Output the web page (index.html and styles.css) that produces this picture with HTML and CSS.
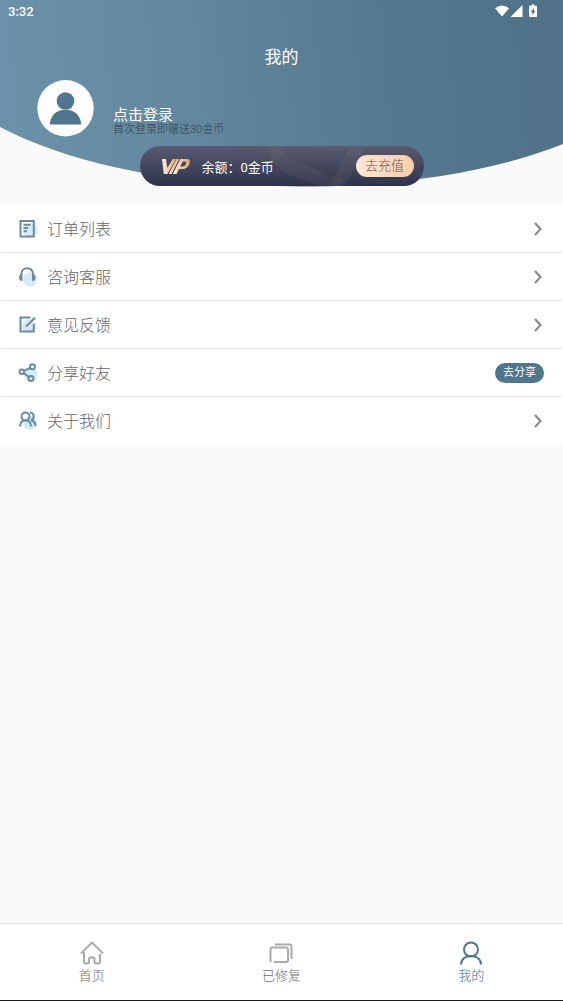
FILE: index.html
```html
<!DOCTYPE html>
<html lang="zh-CN">
<head>
<meta charset="utf-8">
<meta name="viewport" content="width=device-width, initial-scale=1">
<title>我的</title>
<link rel="stylesheet" href="styles.css">
</head>
<body>
<div class="app">
  <header class="hero">
    <svg class="hero-bg" viewBox="0 0 563 205" preserveAspectRatio="none" aria-hidden="true">
      <defs>
        <linearGradient id="sky" x1="0" y1="0.03" x2="1" y2="0">
          <stop offset="0" stop-color="#6b92aa"/>
          <stop offset="0.35" stop-color="#62869d"/>
          <stop offset="0.65" stop-color="#557a90"/>
          <stop offset="1" stop-color="#507187"/>
        </linearGradient>
      </defs>
      <path d="M0 0H563V144C410 205 140 201 0 127Z" fill="url(#sky)"/>
    </svg>
    <div class="status">
      <span>3:32</span>
      <svg width="46" height="16" viewBox="0 0 46 16" fill="#fff" aria-hidden="true">
        <path d="M0 5.200Q7 0 14 5.200L7 13.500Z"/>
        <path d="M27.500 2V14H15.500Z"/>
        <path fill-rule="evenodd" d="M36.500 1.500h3v1.300h1.700q.8 0 .8.800v9.600q0 .8-.8.800h-6.400q-.8 0-.8-.8V3.600q0-.8.800-.8h1.700zM39 4.800L35.800 9h1.600v3.200L40.400 8h-1.500z"/>
      </svg>
    </div>
    <h1 class="title">我的</h1>
    <div class="profile">
      <svg class="avatar" viewBox="0 0 57 57" aria-hidden="true">
        <circle cx="28.500" cy="28.200" r="28.200" fill="#fdfdfd"/>
        <circle cx="28.500" cy="21" r="8.800" fill="#50768d"/>
        <path d="M12.800 44.500C13.500 35 19.500 29.800 28.500 29.800S43.500 35 44.200 44.500Z" fill="#50768d"/>
      </svg>
      <div class="login">
        <a class="login-link" href="#">点击登录</a>
        <span class="login-tip">首次登录即赠送30金币</span>
      </div>
    </div>
    <section class="vip">
      <svg class="vip-pattern" viewBox="0 0 284 40" preserveAspectRatio="none" aria-hidden="true">
        <g fill="none" stroke="#c5ad95" stroke-opacity=".07" stroke-width="14">
          <path d="M136 0Q136 14 150 21L200 40"/>
          <path d="M218 0L196 42"/>
        </g>
      </svg>
      <svg class="vip-logo" viewBox="0 0 28 17" role="img" aria-label="VIP">
        <defs><linearGradient id="gold"><stop offset="0" stop-color="#ffeadb"/><stop offset="1" stop-color="#e8ac76"/></linearGradient></defs>
        <g fill="url(#gold)">
          <path d="M0 1H4L5.300 10L10.800 1H14L5.500 16H1.800Z"/>
          <path d="M14.500 1H17.200L9.500 16H6.800Z"/>
          <path fill-rule="evenodd" d="M18.300 1H25Q29 1 27.300 6Q25.500 11 20.500 11H17L14.500 16H10.800ZM20.800 3.500L18.200 8.500H20.500Q23 8.500 24 6Q24.800 3.500 23 3.500Z"/>
        </g>
      </svg>
      <span class="balance">余额：0金币</span>
      <button class="recharge" type="button">去充值</button>
    </section>
  </header>

  <main class="menu">
    <a class="row" href="#">
      <svg class="icon" viewBox="0 0 20 20" aria-hidden="true">
        <circle class="tint" cx="12.500" cy="11.500" r="7"/>
        <path class="ink" d="M2.500 2H15.800V17.500H2.500ZM5.500 5.800H12.500M5.500 9H10M5.500 12.200H9"/>
      </svg>
      <span class="label">订单列表</span>
      <svg class="chevron" viewBox="0 0 8 14" aria-hidden="true"><path d="M1 1L6.500 7L1 13"/></svg>
    </a>
    <a class="row" href="#">
      <svg class="icon" viewBox="0 0 20 20" aria-hidden="true">
        <circle class="tint" cx="12" cy="12.500" r="7"/>
        <path class="ink" d="M3.200 9V7.500C3.200 -1 15.200 -1 15.200 7.500V9"/>
        <path class="solid" d="M4.500 7V14Q1 14 1 10.500T4.500 7ZM14 7V14Q17.500 14 17.500 10.500T14 7Z"/>
      </svg>
      <span class="label">咨询客服</span>
      <svg class="chevron" viewBox="0 0 8 14" aria-hidden="true"><path d="M1 1L6.500 7L1 13"/></svg>
    </a>
    <a class="row" href="#">
      <svg class="icon" viewBox="0 0 20 20" aria-hidden="true">
        <circle class="tint" cx="11" cy="11" r="7"/>
        <path class="ink" d="M12.500 2.500H2.500V16.500H15.800V9M8 11.500L17 2.800"/>
      </svg>
      <span class="label">意见反馈</span>
      <svg class="chevron" viewBox="0 0 8 14" aria-hidden="true"><path d="M1 1L6.500 7L1 13"/></svg>
    </a>
    <div class="row">
      <svg class="icon" viewBox="0 0 20 20" aria-hidden="true">
        <circle class="tint" cx="12.500" cy="11.500" r="7"/>
        <g class="ink"><circle cx="3.800" cy="8.800" r="2.300"/><circle cx="14.500" cy="3.800" r="2.500"/><circle cx="13" cy="15.500" r="2.500"/><path d="M6 7.800L12 5M5.800 10L10.800 14"/></g>
      </svg>
      <span class="label">分享好友</span>
      <button class="share" type="button">去分享</button>
    </div>
    <a class="row" href="#">
      <svg class="icon" viewBox="0 0 20 20" aria-hidden="true">
        <circle class="tint" cx="12" cy="12" r="7"/>
        <path class="ink" d="M7.500 1.500a4 4 0 1 1 0 8a4 4 0 1 1 0-8M2 15.500Q2 9.500 7.500 9.500T13 15.500M12 1.500C17 2 16.500 8.500 13 9.300Q17.500 10.500 17.500 15"/>
      </svg>
      <span class="label">关于我们</span>
      <svg class="chevron" viewBox="0 0 8 14" aria-hidden="true"><path d="M1 1L6.500 7L1 13"/></svg>
    </a>
  </main>

  <nav class="tabs">
    <a class="tab" href="#">
      <svg viewBox="0 0 24 24" aria-hidden="true"><path d="M1 12.500L12 1.500L23 12.500M4 11V20.500Q4 22.500 6 22.500H7.500Q9 22.500 9 21V18Q9 16.500 10.500 16.500H13Q14.500 16.500 14.500 18V21Q14.500 22.500 16 22.500H18Q20 22.500 20 20.500V13"/></svg>
      <span>首页</span>
    </a>
    <a class="tab" href="#">
      <svg viewBox="0 0 24 24" aria-hidden="true"><path d="M1.500 21V8.500Q1.500 6.500 3.500 6.500H17Q19 6.500 19 8.500V19Q19 21 17 21H5M6 3.500H20.500Q22.500 3.500 22.500 5.500V18"/></svg>
      <span>已修复</span>
    </a>
    <a class="tab active" href="#" aria-current="page">
      <svg viewBox="0 0 24 24" aria-hidden="true"><circle cx="12" cy="8.500" r="7"/><path d="M2 23.500C2 12 22 12 22 23.500"/></svg>
      <span>我的</span>
    </a>
  </nav>
</div>
</body>
</html>
```

FILE: styles.css
```css
* { box-sizing: border-box; }

body {
  margin: 0;
  background: #fafafa;
  color: #666;
  font-family: Roboto, "Noto Sans CJK SC", sans-serif;
  font-weight: 300;
}

a { color: inherit; text-decoration: none; }
button { border: 0; padding: 0; font: inherit; cursor: pointer; }

.app {
  display: flex;
  flex-direction: column;
  min-height: 100vh;
}

.hero {
  position: relative;
  display: flex;
  flex-direction: column;
  padding-bottom: 19px;
  color: #fff;
}

.hero-bg {
  position: absolute;
  inset: 0;
  z-index: -1;
  width: 100%;
  height: 100%;
}

.status {
  display: flex;
  align-items: center;
  justify-content: space-between;
  height: 24px;
  padding: 0 22px 2px 8px;
  font-size: 13px;
  font-weight: 500;
}

.title {
  margin: 20px 0 0;
  font-size: 17px;
  font-weight: 400;
  line-height: 26px;
  text-align: center;
}

.profile {
  display: flex;
  gap: 19px;
  margin-top: 10px;
  padding-left: 37px;
}

.avatar { width: 57px; height: 57px; }

.login {
  display: flex;
  flex-direction: column;
  justify-content: flex-end;
}

.login-link { font-size: 15px; line-height: 16px; font-weight: 400; }

.login-tip {
  color: #2c414e;
  font-size: 11px;
  line-height: 14px;
}

.vip {
  position: relative;
  display: flex;
  align-items: center;
  align-self: center;
  width: 284px;
  height: 40px;
  margin-top: 9px;
  padding: 0 10px 0 22px;
  border-radius: 20px;
  background: linear-gradient(#595b70, #2e334b);
  overflow: hidden;
}

.vip-pattern {
  position: absolute;
  inset: 0;
  width: 100%;
  height: 100%;
}

.vip-logo { width: 28px; height: 17px; }

.balance {
  margin-left: 12px;
  font-size: 13px;
  font-weight: 400;
}

.recharge {
  position: relative;
  width: 58px;
  height: 22px;
  margin-left: auto;
  border-radius: 11px;
  background: linear-gradient(90deg, #ffe6d5, #fbcda6);
  color: #62564e;
  font-size: 13px;
  line-height: 22px;
}

.menu { flex: 1; }

.row {
  display: flex;
  align-items: center;
  height: 47px;
  margin-bottom: 1px;
  padding: 0 19px 0 18px;
  border-radius: 4px;
  background: #fff;
  box-shadow: 0 1px 1px #e8e8e8;
}

.row:last-child { box-shadow: none; }

.icon { width: 20px; height: 20px; }
.tint { fill: #d5eaf6; }
.ink { fill: none; stroke: #6c8a9d; stroke-width: 2; }
.solid { fill: #6c8a9d; }

.label {
  flex: 1;
  margin-left: 9px;
  padding-bottom: 2px;
  font-size: 16px;
}

.chevron {
  width: 8px;
  height: 14px;
  margin-right: 2px;
  fill: none;
  stroke: #858585;
  stroke-width: 2;
}

.share {
  width: 49px;
  height: 20px;
  border-radius: 10px;
  background: #50758c;
  color: #fff;
  font-size: 11px;
  font-weight: 400;
  line-height: 20px;
}

.tabs {
  display: flex;
  height: 78px;
  border-top: 1px solid #e5e5e5;
  border-bottom: 1px solid #1b1b1b;
  background: #fff;
}

.tab {
  display: flex;
  flex: auto;
  flex-direction: column;
  align-items: center;
  padding-top: 17px;
  color: #6c6c6c;
  font-size: 13px;
  line-height: 21px;
}

.tab svg {
  width: 24px;
  height: 24px;
  fill: none;
  stroke: #aaa;
  stroke-width: 2;
}

.tab.active { color: #456b82; }
.tab.active svg { stroke: #50758c; }
```
